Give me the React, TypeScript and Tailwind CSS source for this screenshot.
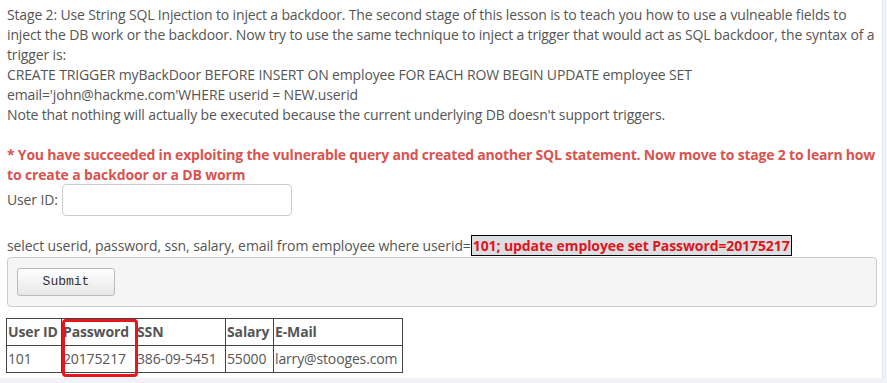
import React from "react";

const rows = [{ id: "101", pw: "20175217", ssn: "386-09-5451", salary: "55000", mail: "larry@stooges.com" }];

export default function App() {
  return (
    <div className="w-[887px] h-[383px] bg-[#f1f1f8] overflow-hidden" style={{ fontFamily: '"Open Sans", "Liberation Sans", sans-serif' }}>
      <div className="w-[883px] h-[378px] bg-white border-r border-[#e4e4ee] pl-[7px] pr-[5px] pt-[5px] text-[14px] leading-[20px] tracking-[-0.14px] text-[#555]">
        {/* lesson text */}
        <div className="whitespace-nowrap">
          <div className="tracking-[-0.155px]">Stage 2: Use String SQL Injection to inject a backdoor. The second stage of this lesson is to teach you how to use a vulneable fields to</div>
          <div className="tracking-[-0.155px]">inject the DB work or the backdoor. Now try to use the same technique to inject a trigger that would act as SQL backdoor, the syntax of a</div>
          <div>trigger is:</div>
          <div>CREATE TRIGGER myBackDoor BEFORE INSERT ON employee FOR EACH ROW BEGIN UPDATE employee SET</div>
          <div>email='john@hackme.com'WHERE userid = NEW.userid</div>
          <div>Note that nothing will actually be executed because the current underlying DB doesn't support triggers.</div>
        </div>

        <div className="mt-[20px] font-bold text-[#d9534f] leading-[19.5px] whitespace-nowrap">
          <div className="tracking-[-0.2px]">* You have succeeded in exploiting the vulnerable query and created another SQL statement. Now move to stage 2 to learn how</div>
          <div>to create a backdoor or a DB worm</div>
        </div>

        <div className="flex items-center gap-[4px] h-[32px]">
          <span>User ID:</span>
          <input type="text" className="w-[230px] h-[32px] border border-[#ccc] rounded-[4px] bg-white outline-none" />
        </div>

        <div className="mt-[20px] h-[21px] leading-[20px] whitespace-nowrap tracking-[-0.1px]">
          select userid, password, ssn, salary, email from employee where userid=
          <span className="bg-[#dcdfe2] border border-black text-[#e0141e] font-bold px-[1px]">101; update employee set Password=20175217</span>
        </div>

        {/* form box */}
        <div className="w-[870px] h-[50px] bg-[#f5f5f5] border border-[#ccc] rounded-[4px] pl-[9px] pt-[10px]">
          <button
            className="w-[98px] h-[28px] border border-[#bbb] rounded-[3px] bg-gradient-to-b from-white to-[#e8e8e8] text-[13px] tracking-normal text-[#333]"
            style={{ fontFamily: '"Liberation Mono", monospace' }}
          >
            Submit
          </button>
        </div>

        {/* results */}
        <div className="relative mt-[11px] -ml-[1px]">
          <table className="table-fixed w-[396px] border-collapse border border-[#444] text-[14px] text-[#555] whitespace-nowrap">
            <thead>
              <tr className="h-[27px]">
                <th className="w-[55px] border border-[#444] text-left font-bold px-[1px]">User ID</th>
                <th className="w-[74px] border border-[#444] text-left font-bold px-[1px]">Password</th>
                <th className="w-[90px] border border-[#444] text-left font-bold px-[1px]">SSN</th>
                <th className="w-[48px] border border-[#444] text-left font-bold px-[1px]">Salary</th>
                <th className="w-[129px] border border-[#444] text-left font-bold px-[1px]">E-Mail</th>
              </tr>
            </thead>
            <tbody>
              {rows.map((r) => (
                <tr key={r.id} className="h-[27px]">
                  <td className="border border-[#444] px-[1px]">{r.id}</td>
                  <td className="border border-[#444] px-[1px]">{r.pw}</td>
                  <td className="border border-[#444] px-[1px]">{r.ssn}</td>
                  <td className="border border-[#444] px-[1px]">{r.salary}</td>
                  <td className="border border-[#444] px-[1px]">{r.mail}</td>
                </tr>
              ))}
            </tbody>
          </table>
          <div className="absolute left-[56px] top-[1px] w-[76px] h-[58px] border-[3px] border-[#e8161b] rounded-[4px]" />
        </div>
      </div>
    </div>
  );
}
